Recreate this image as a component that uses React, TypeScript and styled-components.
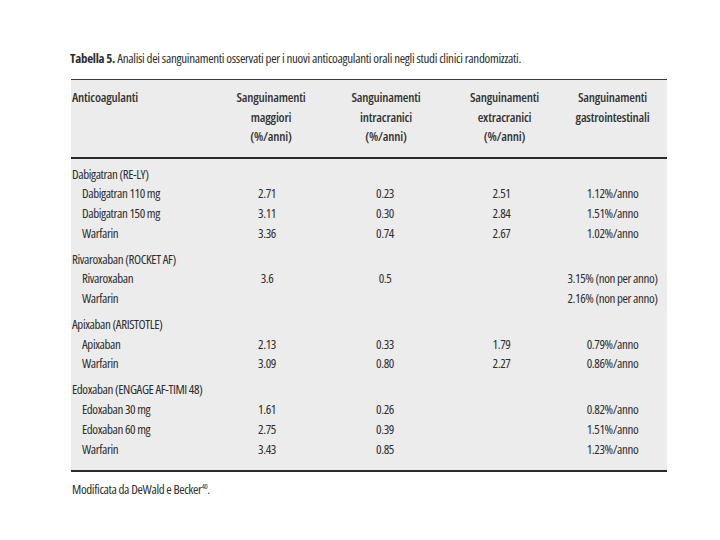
import React from 'react';
import styled, { createGlobalStyle } from 'styled-components';

const GlobalStyle = createGlobalStyle`
  html, body {
    margin: 0;
    padding: 0;
    background: #ffffff;
  }
  body {
    width: 720px;
    height: 540px;
    overflow: hidden;
    font-family: 'Open Sans', 'DejaVu Sans Condensed', sans-serif;
    font-stretch: 75%;
    color: #2e2e2e;
  }
`;

const Page = styled.div`
  padding: 48px 53px 0 71px;
`;

const Caption = styled.div`
  font-size: 13px;
  letter-spacing: -0.3px;
  line-height: 20px;
  margin-left: -1px;
  margin-bottom: 11px;
  white-space: nowrap;

  b {
    font-weight: 700;
    letter-spacing: -0.3px;
  }
`;

const Table = styled.div`
  background: #ececec;
  border-top: 1.5px solid #3a3a3a;
  border-bottom: 2px solid #2a2a2a;
  font-size: 13px;
  letter-spacing: -0.4px;
`;

const Head = styled.div`
  display: grid;
  grid-template-columns: 144px 110px 120px 117px 1fr;
  padding: 8px 5px 10px 1px;
  border-bottom: 2.5px solid #2a2a2a;
  line-height: 19.5px;
  font-size: 13px;
  font-weight: 600;
  letter-spacing: -0.2px;
  color: #333;
`;

const HeadCell = styled.div<{ $left?: boolean }>`
  text-align: ${(p) => (p.$left ? 'left' : 'center')};
`;

const Body = styled.div`
  padding: 6px 5px 11px 1px;
`;

const Row = styled.div<{ $group?: boolean }>`
  display: grid;
  grid-template-columns: 144px 110px 120px 117px 1fr;
  line-height: 19.7px;
  margin-top: ${(p) => (p.$group ? '6.3px' : '0')};

  &:first-child {
    margin-top: 0;
  }
`;

const Name = styled.div<{ $sub?: boolean }>`
  padding-left: ${(p) => (p.$sub ? '10px' : '0')};
  white-space: nowrap;
`;

const Value = styled.div<{ $shift?: number }>`
  text-align: center;
  white-space: nowrap;
  padding-right: ${(p) => p.$shift ?? 0}px;
`;

const Note = styled.div`
  font-size: 13px;
  letter-spacing: -0.35px;
  line-height: 20px;
  margin-top: 7px;
  margin-left: 1px;

  sup {
    font-size: 7.5px;
    line-height: 0;
    vertical-align: 5px;
  }
`;

type Entry = {
  name: string;
  sub?: boolean;
  values?: [string, string, string, string];
};

const rows: Entry[] = [
  { name: 'Dabigatran (RE-LY)' },
  { name: 'Dabigatran 110 mg', sub: true, values: ['2.71', '0.23', '2.51', '1.12%/anno'] },
  { name: 'Dabigatran 150 mg', sub: true, values: ['3.11', '0.30', '2.84', '1.51%/anno'] },
  { name: 'Warfarin', sub: true, values: ['3.36', '0.74', '2.67', '1.02%/anno'] },
  { name: 'Rivaroxaban (ROCKET AF)' },
  { name: 'Rivaroxaban', sub: true, values: ['3.6', '0.5', '', '3.15% (non per anno)'] },
  { name: 'Warfarin', sub: true, values: ['', '', '', '2.16% (non per anno)'] },
  { name: 'Apixaban (ARISTOTLE)' },
  { name: 'Apixaban', sub: true, values: ['2.13', '0.33', '1.79', '0.79%/anno'] },
  { name: 'Warfarin', sub: true, values: ['3.09', '0.80', '2.27', '0.86%/anno'] },
  { name: 'Edoxaban (ENGAGE AF-TIMI 48)' },
  { name: 'Edoxaban 30 mg', sub: true, values: ['1.61', '0.26', '', '0.82%/anno'] },
  { name: 'Edoxaban 60 mg', sub: true, values: ['2.75', '0.39', '', '1.51%/anno'] },
  { name: 'Warfarin', sub: true, values: ['3.43', '0.85', '', '1.23%/anno'] },
];

const shifts = [8, 2, 6, 0];

const App: React.FC = () => {
  return (
    <>
      <GlobalStyle />
      <Page>
        <Caption>
          <b>Tabella 5.</b> Analisi dei sanguinamenti osservati per i nuovi anticoagulanti orali negli studi clinici randomizzati.
        </Caption>
        <Table>
          <Head>
            <HeadCell $left>Anticoagulanti</HeadCell>
            <HeadCell>
              Sanguinamenti
              <br />
              maggiori
              <br />
              (%/anni)
            </HeadCell>
            <HeadCell>
              Sanguinamenti
              <br />
              intracranici
              <br />
              (%/anni)
            </HeadCell>
            <HeadCell>
              Sanguinamenti
              <br />
              extracranici
              <br />
              (%/anni)
            </HeadCell>
            <HeadCell>
              Sanguinamenti
              <br />
              gastrointestinali
            </HeadCell>
          </Head>
          <Body>
            {rows.map((r, i) => (
              <Row key={i} $group={!r.sub}>
                <Name $sub={r.sub}>{r.name}</Name>
                {(r.values ?? ['', '', '', '']).map((v, j) => (
                  <Value key={j} $shift={shifts[j]}>
                    {v}
                  </Value>
                ))}
              </Row>
            ))}
          </Body>
        </Table>
        <Note>
          Modificata da DeWald e Becker<sup>40</sup>.
        </Note>
      </Page>
    </>
  );
};

export default App;
